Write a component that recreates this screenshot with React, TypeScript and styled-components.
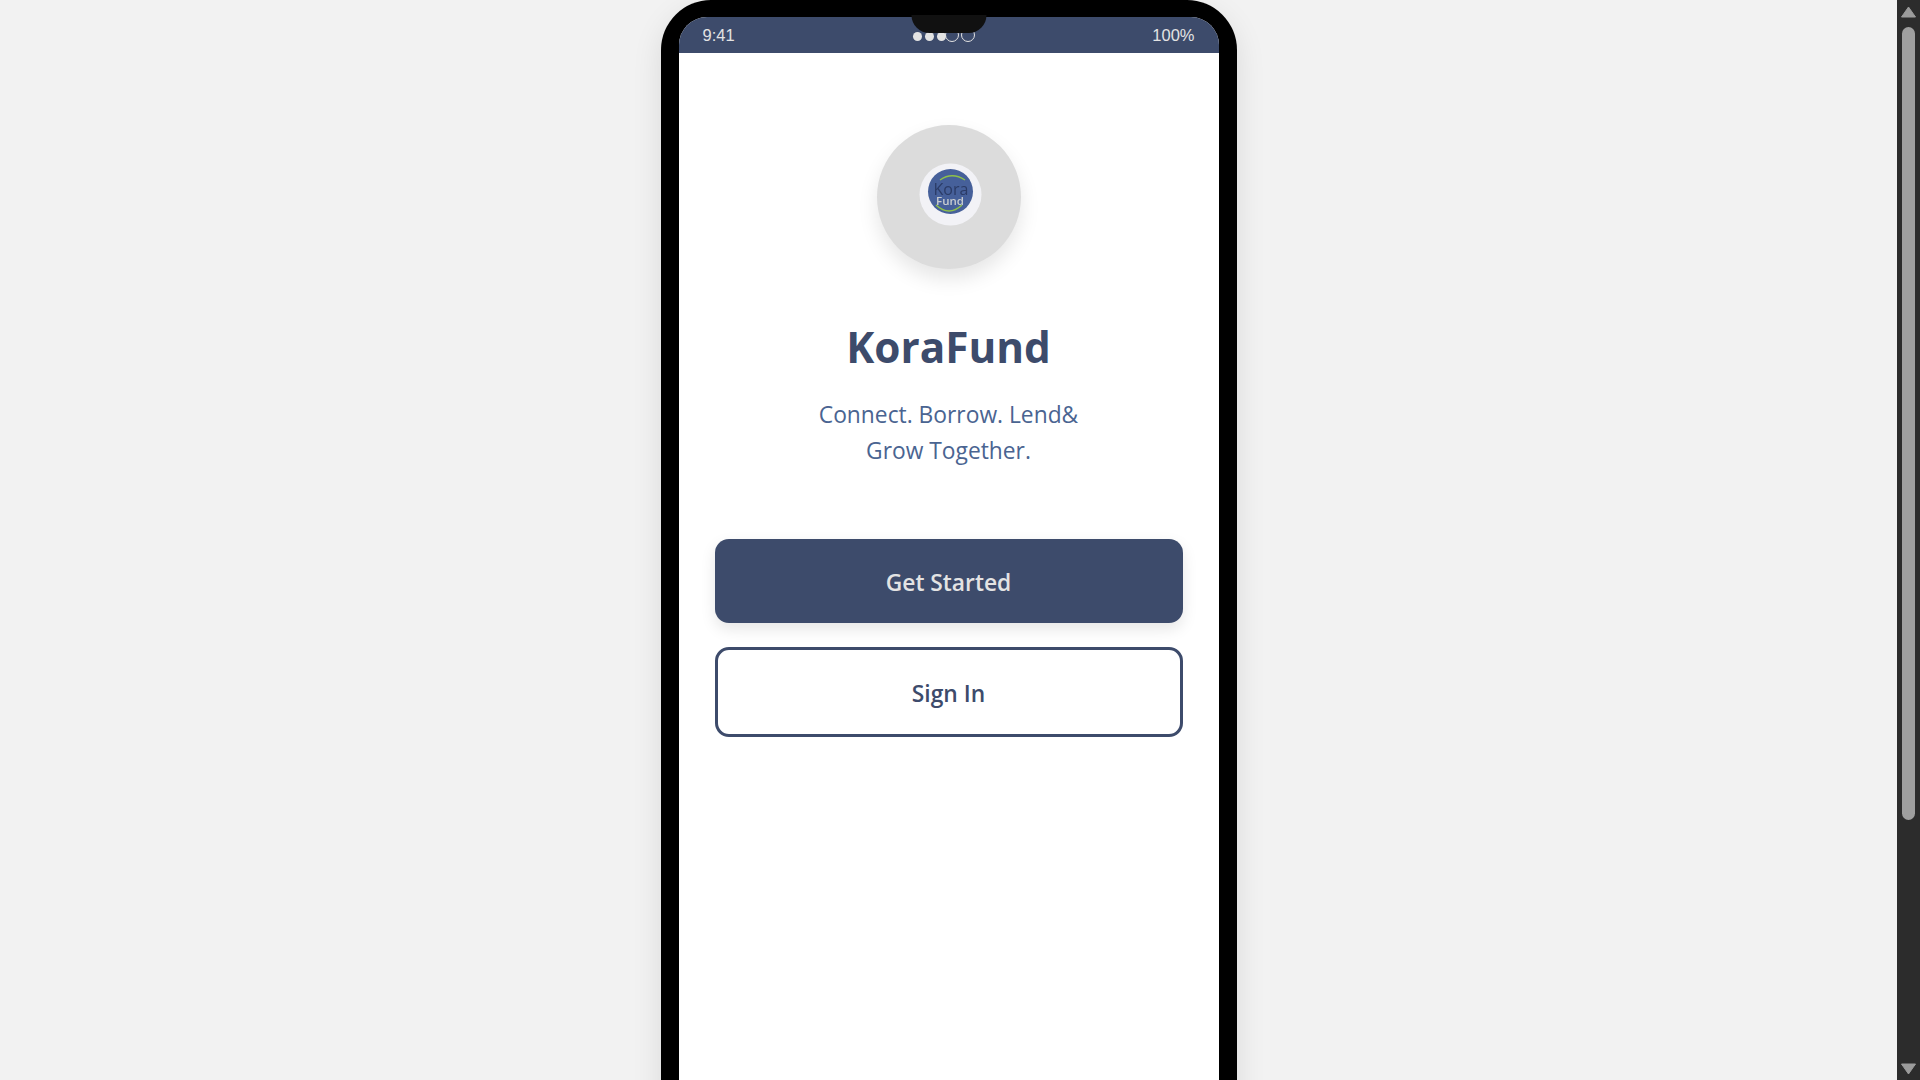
import React from 'react';
import styled, { createGlobalStyle } from 'styled-components';

const GlobalStyle = createGlobalStyle`
  html, body {
    margin: 0;
    height: 100%;
    overflow: hidden;
  }

  body {
    background-color: #f2f2f2;
    font-family: "Open Sans", "Noto Sans", "Liberation Sans", sans-serif;
  }

  * {
    box-sizing: border-box;
  }
`;

const Window = styled.div`
  display: flex;
  height: 100vh;
`;

const Viewport = styled.main`
  flex: 1;
  display: flex;
  justify-content: center;
  height: 100%;
  overflow: hidden;
`;

// page scrollbar, the browser hides the real one in the screenshot
const ScrollRail = styled.div`
  display: grid;
  grid-template-rows: 27px 1fr 27px;
  width: 23px;
  height: 100%;
  background-color: #2c2c2c;
`;

const ScrollArrow = styled.svg`
  width: 23px;
  height: 27px;
  color: #9b9b9b;
`;

const ScrollTrack = styled.div`
  padding: 0 5px;
`;

const ScrollThumb = styled.div`
  height: 793px;
  background-color: #9f9f9f;
  border-radius: 7px;
`;

const PhoneFrame = styled.div`
  position: relative;
  flex: none;
  width: 576px;
  height: 1397px;
  background-color: #000;
  border-radius: 50px;
  padding: 17px 18px 18px;
  box-shadow: 0 10px 30px rgba(0, 0, 0, 0.1);
`;

const Notch = styled.div`
  position: absolute;
  top: 15px;
  left: 50%;
  width: 75px;
  height: 18px;
  transform: translateX(-50%);
  background-color: #111;
  border-radius: 0 0 18px 18px;
`;

const Screen = styled.div`
  display: flex;
  flex-direction: column;
  height: 100%;
  background-color: #fff;
  border-radius: 28px;
  overflow: hidden;
`;

const StatusBar = styled.div`
  display: flex;
  justify-content: space-between;
  align-items: center;
  height: 36px;
  padding: 1px 24px 0;
  background-color: #3d4b6b;
  color: #e3e3e3;
  font-family: "Liberation Sans", Arial, sans-serif;
  font-size: 16.5px;
`;

const SignalDots = styled.div`
  display: flex;
  align-items: flex-end;
  gap: 0;
  margin-top: -2px;
`;

const DotGroup = styled.div<{ $gap: number }>`
  display: flex;
  align-items: flex-end;
  gap: ${p => p.$gap}px;
  margin-right: -1px;
`;

const Dot = styled.span<{ $filled?: boolean }>`
  width: ${p => (p.$filled ? '9px' : '14px')};
  height: ${p => (p.$filled ? '9px' : '14px')};
  margin-bottom: ${p => (p.$filled ? '1px' : '0')};
  border-radius: 50%;
  background-color: ${p => (p.$filled ? '#e3e3e3' : 'transparent')};
  border: ${p => (p.$filled ? 'none' : '1px solid #e3e3e3')};
`;

const Welcome = styled.div`
  display: flex;
  flex-direction: column;
  align-items: center;
  padding: 72px 36px 0;
`;

const LogoDisc = styled.div`
  display: flex;
  align-items: center;
  justify-content: center;
  width: 144px;
  height: 144px;
  border-radius: 50%;
  background-color: #dcdcdc;
  box-shadow: 0 10px 20px rgba(0, 0, 0, 0.1);
`;

const LogoMark = styled.svg`
  width: 63px;
  height: 63px;
  margin: -6px 0 0 3px;
  filter: blur(0.4px);
`;

const Title = styled.h1`
  margin: 49px 0 0;
  font-size: 42.3px;
  line-height: 58px;
  font-weight: 700;
  color: #3d4b6b;
`;

const Tagline = styled.p`
  margin: 21px 0 0;
  font-size: 22.8px;
  line-height: 36px;
  text-align: center;
  color: #4a6491;
`;

const Actions = styled.div`
  display: flex;
  flex-direction: column;
  gap: 24px;
  width: 100%;
  margin-top: 70px;
`;

const ActionButton = styled.button<{ $outline?: boolean }>`
  width: 100%;
  height: ${p => (p.$outline ? '90px' : '84px')};
  padding: 2px 0 0;
  border-radius: 14px;
  border: ${p => (p.$outline ? '3px solid #3d4b6b' : 'none')};
  background-color: ${p => (p.$outline ? '#fff' : '#3d4b6b')};
  color: ${p => (p.$outline ? '#3d4b6b' : '#e3e3e3')};
  font-family: inherit;
  font-size: 22.8px;
  font-weight: 600;
  box-shadow: ${p => (p.$outline ? 'none' : '0 6px 15px rgba(0, 0, 0, 0.1)')};
`;

const App: React.FC = () => (
  <Window>
    <GlobalStyle />
    <Viewport>
      <PhoneFrame>
        <Notch />
        <Screen>
          <StatusBar>
            <span>9:41</span>
            <SignalDots>
              <DotGroup $gap={3}>
                <Dot $filled />
                <Dot $filled />
                <Dot $filled />
              </DotGroup>
              <DotGroup $gap={2}>
                <Dot />
                <Dot />
              </DotGroup>
            </SignalDots>
            <span>100%</span>
          </StatusBar>
          <Welcome>
            <LogoDisc>
              <LogoMark viewBox="0 0 63 63">
                <circle cx="31.5" cy="31.5" r="31" fill="#f2f2f6" />
                <circle cx="31.5" cy="28.5" r="22.5" fill="#46609a" />
                <path d="M21 17 Q33 8.5 46 17" fill="none" stroke="#8fc24a" strokeWidth="1.4" />
                <path d="M17 42 Q30 54 43 42" fill="none" stroke="#8fc24a" strokeWidth="1.4" />
                <text x="32" y="32" textAnchor="middle" fontFamily="Open Sans" fontSize="16" fill="#2b3b66">
                  Kora
                </text>
                <text x="31" y="42" textAnchor="middle" fontFamily="Open Sans" fontWeight="600" fontSize="11.5" fill="#c8ccd0">
                  Fund
                </text>
              </LogoMark>
            </LogoDisc>
            <Title>KoraFund</Title>
            <Tagline>
              Connect. Borrow. Lend&amp;
              <br />
              Grow Together.
            </Tagline>
            <Actions>
              <ActionButton>Get Started</ActionButton>
              <ActionButton $outline>Sign In</ActionButton>
            </Actions>
          </Welcome>
        </Screen>
      </PhoneFrame>
    </Viewport>
    <ScrollRail>
      <ScrollArrow viewBox="0 0 23 27">
        <path d="M11.5 7 L18.5 17 H4.5 Z" fill="currentColor" stroke="currentColor" strokeLinejoin="round" />
      </ScrollArrow>
      <ScrollTrack>
        <ScrollThumb />
      </ScrollTrack>
      <ScrollArrow viewBox="0 0 23 27">
        <path d="M4.5 11 H18.5 L11.5 21 Z" fill="currentColor" stroke="currentColor" strokeLinejoin="round" />
      </ScrollArrow>
    </ScrollRail>
  </Window>
);

export default App;
